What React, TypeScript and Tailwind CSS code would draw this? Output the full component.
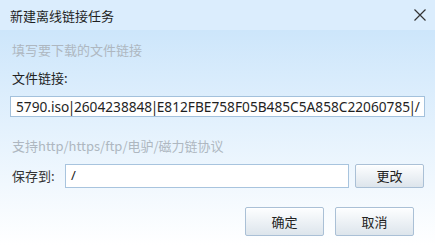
import React from "react";

const font = { fontFamily: '"Noto Sans CJK SC", "Noto Sans", sans-serif' };

function Btn({ children, className }: { children: React.ReactNode; className: string }) {
  return (
    <button
      className={
        "flex items-center justify-center rounded-[2px] border border-[#aac0d6] bg-gradient-to-b from-[#fdfeff] to-[#dde5ec] text-[13px] text-[#222] shadow-[inset_0_1px_0_#ffffff] " +
        className
      }
    >
      {children}
    </button>
  );
}

function Pipe() {
  return <span className="-mx-[1.5px]">|</span>;
}

export default function App() {
  return (
    <div className="w-[435px] h-[245px] overflow-hidden flex flex-col select-none" style={font}>
      <div className="h-[30px] shrink-0 bg-[#dbedfd] flex items-center justify-between pl-[10px] pr-[9px]">
        <span className="text-[13px] text-[#1f1f1f] leading-none">新建离线链接任务</span>
        <svg width="12" height="12" viewBox="0 0 12 12" className="text-[#333]">
          <path d="M0.5 0.5 L11.5 11.5 M11.5 0.5 L0.5 11.5" stroke="currentColor" strokeWidth="1.2" />
        </svg>
      </div>
      <div className="flex-1 bg-gradient-to-b from-[#cde6fb] to-[#ffffff] flex flex-col px-[10px]">
        <div className="h-[20px] mt-[10px] pl-[2px] flex items-center text-[13px] text-[#aeb7c0]">填写要下载的文件链接</div>
        <div className="h-[20px] mt-[8px] pl-[2px] flex items-center text-[13px] text-[#222]">文件链接:</div>
        <div className="h-[21px] mt-[8px] border border-[#a3c1dc] bg-white flex items-center pl-[5px] overflow-hidden">
          <span className="whitespace-nowrap text-[13.7px] text-[#1f1f1f] leading-none" style={{ fontFamily: '"Noto Sans", sans-serif' }}>
            5790.iso<Pipe />2604238848<Pipe />E812FBE758F05B485C5A858C22060785<Pipe />/
          </span>
        </div>
        <div className="h-[20px] mt-[19px] pl-[2px] flex items-center text-[13px] text-[#aeb7c0]">
          支持http/https/ftp/电驴/磁力链协议
        </div>
        <div className="flex items-center mt-[8px] h-[24px]">
          <span className="w-[55px] pl-[2px] text-[13px] text-[#333]">保存到:</span>
          <div className="w-[284px] h-[24px] border border-[#a8c4de] bg-white flex items-center pl-[5px] text-[13px] text-[#222]" style={{ fontFamily: '"Noto Sans", sans-serif' }}>
            /
          </div>
          <Btn className="ml-[6px] w-[69px] h-[24px]">更改</Btn>
        </div>
        <div className="flex justify-end mt-[19px] pr-[11px] gap-[11px]">
          <Btn className="w-[79px] h-[29px]">确定</Btn>
          <Btn className="w-[79px] h-[29px]">取消</Btn>
        </div>
      </div>
    </div>
  );
}
